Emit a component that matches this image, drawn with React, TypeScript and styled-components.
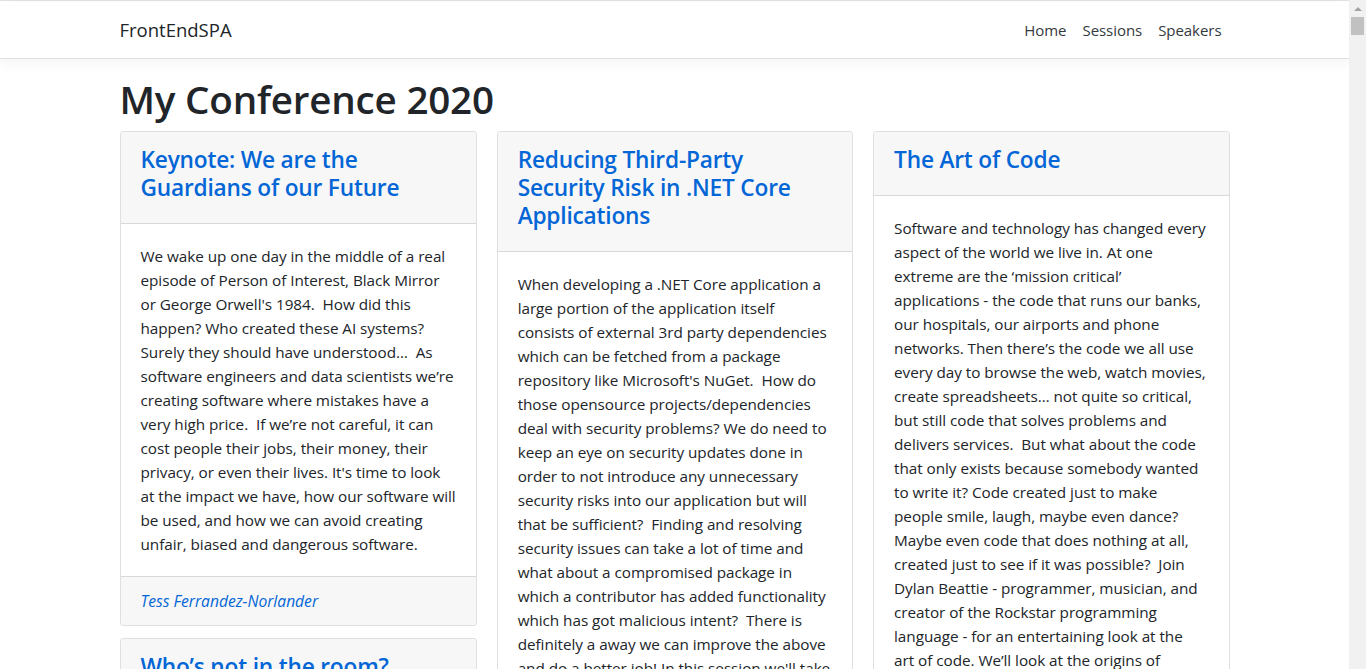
import React from "react";
import styled, { createGlobalStyle } from "styled-components";

const GlobalStyle = createGlobalStyle`
  *, *::before, *::after { box-sizing: border-box; }
  html, body { margin: 0; padding: 0; background: #fff; }
  body {
    font-family: "Open Sans", "Noto Sans", sans-serif;
    font-size: 16px;
    line-height: 1.5;
    color: #212529;
  }
  #root { padding-top: 1px; border-top: 1px solid #e3e3e3; }
`;

const Page = styled.div`
  margin-right: 17px;
`;

const ScrollTrack = styled.div`
  position: fixed;
  top: 0;
  right: 0;
  width: 17px;
  height: 100vh;
  background: #f1f1f1;
  display: flex;
  flex-direction: column;
  align-items: center;
  z-index: 10;
`;

const ScrollArrow = styled.div`
  width: 0;
  height: 0;
  margin-top: 7px;
  border-left: 4px solid transparent;
  border-right: 4px solid transparent;
  border-bottom: 4px solid #a3a3a3;
`;

const ScrollThumb = styled.div`
  width: 13px;
  height: 18px;
  margin-top: 6px;
  background: #c1c1c1;
`;

const Navbar = styled.header`
  background: #fff;
  border-bottom: 1px solid #dee2e6;
  box-shadow: 0 4px 12px rgba(0, 0, 0, 0.05);
  margin-bottom: 16px;
`;

const Container = styled.div`
  max-width: 1140px;
  margin: 0 auto;
  padding: 0 15px;
`;

const NavInner = styled(Container)`
  display: flex;
  align-items: center;
  justify-content: space-between;
  height: 56px;
`;

const Brand = styled.a`
  font-size: 18.5px;
  color: #212529;
  text-decoration: none;
  line-height: 30px;
`;

const NavList = styled.nav`
  display: flex;
`;

const NavLink = styled.a`
  font-size: 15px;
  color: #343a40;
  padding: 8px 8px;
  text-decoration: none;
  letter-spacing: -0.05px;
`;

const Title = styled.h1`
  font-size: 38.6px;
  font-weight: 600;
  line-height: 48px;
  margin: 0 0 8px;
  letter-spacing: -0.2px;
`;

const Columns = styled.div`
  display: grid;
  grid-template-columns: repeat(3, 1fr);
  column-gap: 20px;
  align-items: start;
`;

const Column = styled.div`
  display: flex;
  flex-direction: column;
  gap: 12px;
`;

const Card = styled.article`
  border: 1px solid rgba(0, 0, 0, 0.125);
  border-radius: 4px;
  background: #fff;
  overflow: hidden;
`;

const CardHeader = styled.div`
  background: #f7f7f7;
  border-bottom: 1px solid rgba(0, 0, 0, 0.125);
  padding: 14px 20px 13px;
`;

const CardTitle = styled.h4`
  margin: 0 0 8px;
  font-size: 22.7px;
  font-weight: 600;
  line-height: 28px;
  letter-spacing: -0.2px;
  a {
    color: #0366d6;
    text-decoration: none;
  }
`;

const CardBody = styled.div`
  padding: 20px;
  font-size: 15.3px;
  line-height: 24px;
  white-space: nowrap;
  letter-spacing: -0.05px;
`;

const CardFooter = styled.div`
  background: #f7f7f7;
  border-top: 1px solid rgba(0, 0, 0, 0.125);
  padding: 12px 20px;
  font-size: 15.6px;
  line-height: 24px;
  font-style: italic;
  a {
    color: #0366d6;
    text-decoration: none;
  }
`;

type Session = {
  title: string[];
  lines?: string[];
  speaker?: string;
};

const columns: Session[][] = [
  [
    {
      title: ["Keynote: We are the", "Guardians of our Future"],
      lines: [
        "We wake up one day in the middle of a real",
        "episode of Person of Interest, Black Mirror",
        "or George Orwell's 1984.  How did this",
        "happen? Who created these AI systems?",
        "Surely they should have understood…  As",
        "software engineers and data scientists we’re",
        "creating software where mistakes have a",
        "very high price.   If we’re not careful, it can",
        "cost people their jobs, their money, their",
        "privacy, or even their lives. It's time to look",
        "at the impact we have, how our software will",
        "be used, and how we can avoid creating",
        "unfair, biased and dangerous software.",
      ],
      speaker: "Tess Ferrandez-Norlander",
    },
    {
      title: ["Who’s not in the room?"],
    },
  ],
  [
    {
      title: ["Reducing Third-Party", "Security Risk in .NET Core", "Applications"],
      lines: [
        "When developing a .NET Core application a",
        "large portion of the application itself",
        "consists of external 3rd party dependencies",
        "which can be fetched from a package",
        "repository like Microsoft's NuGet.  How do",
        "those opensource projects/dependencies",
        "deal with security problems? We do need to",
        "keep an eye on security updates done in",
        "order to not introduce any unnecessary",
        "security risks into our application but will",
        "that be sufficient?  Finding and resolving",
        "security issues can take a lot of time and",
        "what about a compromised package in",
        "which a contributor has added functionality",
        "which has got malicious intent?  There is",
        "definitely a away we can improve the above",
        "and do a better job! In this session we'll take",
      ],
    },
  ],
  [
    {
      title: ["The Art of Code"],
      lines: [
        "Software and technology has changed every",
        "aspect of the world we live in. At one",
        "extreme are the ‘mission critical’",
        "applications - the code that runs our banks,",
        "our hospitals, our airports and phone",
        "networks. Then there’s the code we all use",
        "every day to browse the web, watch movies,",
        "create spreadsheets… not quite so critical,",
        "but still code that solves problems and",
        "delivers services.  But what about the code",
        "that only exists because somebody wanted",
        "to write it? Code created just to make",
        "people smile, laugh, maybe even dance?",
        "Maybe even code that does nothing at all,",
        "created just to see if it was possible?  Join",
        "Dylan Beattie - programmer, musician, and",
        "creator of the Rockstar programming",
        "language - for an entertaining look at the",
        "art of code. We’ll look at the origins of",
      ],
    },
  ],
];

const withBreaks = (lines: string[]) =>
  lines.map((l, i) => (
    <React.Fragment key={i}>
      {l.replace(/  /g, "\u00a0 ")}
      {i < lines.length - 1 && <br />}
    </React.Fragment>
  ));

const SessionCard = ({ s }: { s: Session }) => (
  <Card>
    <CardHeader>
      <CardTitle>
        <a href="#">{withBreaks(s.title)}</a>
      </CardTitle>
    </CardHeader>
    {s.lines && <CardBody>{withBreaks(s.lines)}</CardBody>}
    {s.speaker && (
      <CardFooter>
        <a href="#">{s.speaker}</a>
      </CardFooter>
    )}
  </Card>
);

export default function App() {
  return (
    <>
      <GlobalStyle />
      <Page>
        <Navbar>
          <NavInner>
            <Brand href="#">FrontEndSPA</Brand>
            <NavList>
              <NavLink href="#">Home</NavLink>
              <NavLink href="#">Sessions</NavLink>
              <NavLink href="#">Speakers</NavLink>
            </NavList>
          </NavInner>
        </Navbar>
        <Container>
          <Title>My Conference 2020</Title>
          <Columns>
            {columns.map((col, ci) => (
              <Column key={ci}>
                {col.map((s, si) => (
                  <SessionCard key={si} s={s} />
                ))}
              </Column>
            ))}
          </Columns>
        </Container>
      </Page>
      <ScrollTrack>
        <ScrollArrow />
        <ScrollThumb />
      </ScrollTrack>
    </>
  );
}
